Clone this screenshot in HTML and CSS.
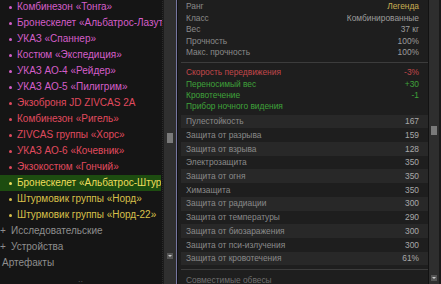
FILE: index.html
```html
<!DOCTYPE html>
<html lang="ru">
  <head>
    <meta charset="UTF-8" />
    <title>Снаряжение</title>
    <link rel="stylesheet" href="styles.css">
  </head>
  <body>
    <div class="window">
      <ul class="tree">
        <li class="item pink"><span class="dot"></span>Комбинезон «Тонга»</li>
        <li class="item pink"><span class="dot"></span>Бронескелет «Альбатрос-Лазутчик»</li>
        <li class="item pink"><span class="dot"></span>УКАЗ «Спаннер»</li>
        <li class="item pink"><span class="dot"></span>Костюм «Экспедиция»</li>
        <li class="item pink"><span class="dot"></span>УКАЗ АО-4 «Рейдер»</li>
        <li class="item pink"><span class="dot"></span>УКАЗ АО-5 «Пилигрим»</li>
        <li class="item red"><span class="dot"></span>Экзоброня JD ZIVCAS 2A</li>
        <li class="item red"><span class="dot"></span>Комбинезон «Ригель»</li>
        <li class="item red"><span class="dot"></span>ZIVCAS группы «Хорс»</li>
        <li class="item red"><span class="dot"></span>УКАЗ АО-6 «Кочевник»</li>
        <li class="item red"><span class="dot"></span>Экзокостюм «Гончий»</li>
        <li class="item gold selected"><span class="dot"></span>Бронескелет «Альбатрос-Штурмовик»</li>
        <li class="item gold"><span class="dot"></span>Штурмовик группы «Норд»</li>
        <li class="item gold"><span class="dot"></span>Штурмовик группы «Норд-22»</li>
        <li class="group"><span class="plus">+</span>Исследовательские</li>
        <li class="group"><span class="plus">+</span>Устройства</li>
        <li class="group root">Артефакты</li>
        <li class="more">..</li>
      </ul>
      <div class="scroll left-scroll">
        <span class="thumb"></span>
        <span class="arrow"></span>
      </div>
      <div class="splitter"></div>
      <div class="details">
        <div class="info">
          <div class="row"><span>Ранг</span><span class="legend">Легенда</span></div>
          <div class="row"><span>Класс</span><span>Комбинированные</span></div>
          <div class="row"><span>Вес</span><span>37 кг</span></div>
          <div class="row"><span>Прочность</span><span>100%</span></div>
          <div class="row"><span>Макс. прочность</span><span>100%</span></div>
        </div>
        <div class="bonus">
          <div class="row bad"><span>Скорость передвижения</span><span>-3%</span></div>
          <div class="row good"><span>Переносимый вес</span><span>+30</span></div>
          <div class="row good"><span>Кровотечение</span><span>-1</span></div>
          <div class="row good"><span>Прибор ночного видения</span></div>
        </div>
        <div class="stats">
          <div class="row"><span>Пулестойкость</span><span>167</span></div>
          <div class="row"><span>Защита от разрыва</span><span>159</span></div>
          <div class="row"><span>Защита от взрыва</span><span>128</span></div>
          <div class="row"><span>Электрозащита</span><span>350</span></div>
          <div class="row"><span>Защита от огня</span><span>350</span></div>
          <div class="row"><span>Химзащита</span><span>350</span></div>
          <div class="row"><span>Защита от радиации</span><span>300</span></div>
          <div class="row"><span>Защита от температуры</span><span>290</span></div>
          <div class="row"><span>Защита от биозаражения</span><span>300</span></div>
          <div class="row"><span>Защита от пси-излучения</span><span>300</span></div>
          <div class="row"><span>Защита от кровотечения</span><span>61%</span></div>
        </div>
        <div class="mods">
          <div class="row"><span>Совместимые обвесы</span></div>
        </div>
      </div>
      <div class="scroll right-scroll">
        <span class="thumb"></span>
        <span class="arrow"></span>
      </div>
    </div>
  </body>
</html>
```

FILE: styles.css
```css
* {
  margin: 0;
  padding: 0;
  box-sizing: border-box;
}
ul {
  list-style: none;
}
body {
  background: #151515;
  font-family: "Liberation Sans", Arial, sans-serif;
  overflow: hidden;
}
.window {
  display: flex;
  width: 441px;
  height: 284px;
  overflow: hidden;
}
.tree {
  width: 163px;
  flex: none;
  margin-top: -1px;
  font-size: 10px;
  border-right: 1px dotted #2a2a2a;
}
.tree li {
  display: flex;
  align-items: center;
  height: 16px;
  line-height: 16px;
  white-space: nowrap;
  overflow: hidden;
}
.dot {
  width: 3px;
  height: 3px;
  border-radius: 50%;
  background: currentColor;
  margin: 0 5px 0 9px;
  flex: none;
}
.pink {
  color: #d45ec9;
}
.red {
  color: #e04a5e;
}
.gold {
  color: #d8c04a;
}
.selected {
  background: #1d4c10;
  color: #eede5c;
  margin-right: 1px;
}
.group {
  color: #8e8e8e;
}
.plus {
  width: 11px;
  flex: none;
}
.root {
  padding-left: 2px;
}
.more {
  color: #555;
  padding-left: 78px;
  font-size: 9px;
}
.scroll {
  width: 13px;
  flex: none;
  background: #2f2f2f;
  position: relative;
}
.left-scroll {
  border-left: 1px solid #1c1c1c;
}
.scroll .thumb {
  position: absolute;
  left: 3px;
  width: 6px;
  height: 10px;
  background: #7a7a7a;
}
.left-scroll .thumb {
  top: 133px;
}
.scroll .arrow {
  position: absolute;
  left: 3px;
  width: 6px;
  height: 6px;
  background: #555;
}
.scroll .arrow::after {
  content: "";
  position: absolute;
  left: 1px;
  top: 2px;
  border-left: 2px solid transparent;
  border-right: 2px solid transparent;
  border-top: 2px solid #ccc;
}
.left-scroll .arrow {
  top: 253px;
}
.splitter {
  width: 2px;
  flex: none;
  background: #7676a0;
  border-right: 1px solid #101010;
}
.details {
  flex: 1;
  background: #1e1e1e;
  padding-left: 3px;
  font-size: 8.4px;
  color: #8a8a8a;
  border-right: 1px solid #121212;
}
.row {
  display: flex;
  justify-content: space-between;
  align-items: center;
  padding: 0 9px 0 5px;
  white-space: nowrap;
  line-height: 1;
}
.info {
  padding-top: 1px;
  padding-bottom: 4px;
  border-bottom: 1px solid #3c3c3c;
}
.info .row {
  height: 11.4px;
}
.info .row span:last-child {
  color: #9c9c9c;
}
.info .legend {
  color: #c9ae52 !important;
}
.bonus {
  padding-top: 4px;
}
.bonus .row {
  height: 11.2px;
}
.bad {
  color: #c2474a;
}
.good {
  color: #3ea23a;
}
.stats {
  margin-top: 3px;
  padding-bottom: 4px;
  border-bottom: 1px solid #3c3c3c;
}
.stats .row {
  height: 13.7px;
}
.stats .row:nth-child(odd) {
  background: #282828;
}
.stats .row span:last-child {
  color: #a8a8a8;
}
.mods {
  padding-top: 4px;
  color: #6e6e6e;
}
.mods .row {
  height: 12px;
}
.right-scroll {
  width: 12px;
  background: #2e2e2e;
  border-right: 2px solid #1a1a1a;
}
.right-scroll .thumb {
  top: 126px;
  left: 2px;
  height: 9px;
}
.right-scroll .arrow {
  top: 275px;
  left: 2px;
}
```
